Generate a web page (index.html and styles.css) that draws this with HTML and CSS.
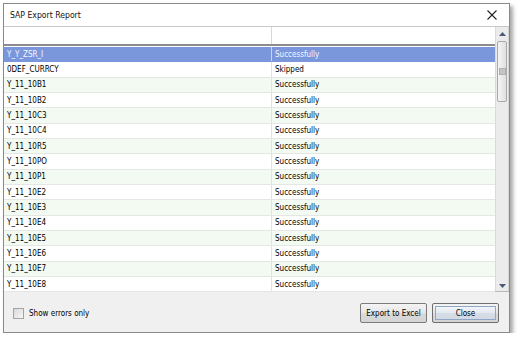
FILE: index.html
```html
<!DOCTYPE html>
<html>
<head>
<meta charset="utf-8">
<link rel="stylesheet" href="styles.css">
</head>
<body>
<div class="window">
  <div class="titlebar">
    <span class="title">SAP Export Report</span>
    <svg class="close-x" width="10" height="10" viewBox="0 0 10 10"><path d="M0.5 0.5 L9.5 9.5 M9.5 0.5 L0.5 9.5" stroke="#222" stroke-width="1.1" fill="none"/></svg>
  </div>
  <div class="grid">
    <div class="table">
      <div class="row header"><div class="c1"></div><div class="c2"></div></div>
      <div class="row selected"><div class="c1">Y_Y_ZSR_I</div><div class="c2">Successfully</div></div>
      <div class="row"><div class="c1">0DEF_CURRCY</div><div class="c2">Skipped</div></div>
      <div class="row alt"><div class="c1">Y_11_10B1</div><div class="c2">Successfully</div></div>
      <div class="row"><div class="c1">Y_11_10B2</div><div class="c2">Successfully</div></div>
      <div class="row alt"><div class="c1">Y_11_10C3</div><div class="c2">Successfully</div></div>
      <div class="row"><div class="c1">Y_11_10C4</div><div class="c2">Successfully</div></div>
      <div class="row alt"><div class="c1">Y_11_10R5</div><div class="c2">Successfully</div></div>
      <div class="row"><div class="c1">Y_11_10PO</div><div class="c2">Successfully</div></div>
      <div class="row alt"><div class="c1">Y_11_10P1</div><div class="c2">Successfully</div></div>
      <div class="row"><div class="c1">Y_11_10E2</div><div class="c2">Successfully</div></div>
      <div class="row alt"><div class="c1">Y_11_10E3</div><div class="c2">Successfully</div></div>
      <div class="row"><div class="c1">Y_11_10E4</div><div class="c2">Successfully</div></div>
      <div class="row alt"><div class="c1">Y_11_10E5</div><div class="c2">Successfully</div></div>
      <div class="row"><div class="c1">Y_11_10E6</div><div class="c2">Successfully</div></div>
      <div class="row alt"><div class="c1">Y_11_10E7</div><div class="c2">Successfully</div></div>
      <div class="row"><div class="c1">Y_11_10E8</div><div class="c2">Successfully</div></div>
    </div>
    <div class="scrollbar">
      <svg class="arrow" width="7" height="4" viewBox="0 0 7 4"><path d="M0 4 L3.5 0 L7 4 Z" fill="#4a5a78"/></svg>
      <div class="thumb"><div class="grip"></div></div>
      <div class="track"></div>
      <svg class="arrow" width="7" height="4" viewBox="0 0 7 4"><path d="M0 0 L7 0 L3.5 4 Z" fill="#4a5a78"/></svg>
    </div>
  </div>
  <div class="footer">
    <label class="check"><span class="box"></span>Show errors only</label>
    <div class="buttons">
      <button class="btn">Export to Excel</button>
      <button class="btn focused"><span>Close</span></button>
    </div>
  </div>
</div>
</body>
</html>
```
FILE: styles.css
```css
html, body {
  margin: 0;
  padding: 0;
  background: #ffffff;
}
body {
  font-family: "DejaVu Sans Condensed", "Liberation Sans", Arial, sans-serif;
  font-size: 8px;
  color: #000;
}
.window {
  margin: 3px 0 0 3px;
  width: 505px;
  height: 328px;
  border: 1px solid #8a8a8a;
  box-shadow: 3px 3px 4px rgba(0,0,0,0.35);
  display: flex;
  flex-direction: column;
  background: #f0f0f0;
}
.titlebar {
  height: 22px;
  flex: none;
  background: #fff;
  border-bottom: 1px solid #c8c8c8;
  display: flex;
  align-items: center;
  justify-content: space-between;
  padding: 0 12px 0 6px;
}
.title {
  font-size: 8.6px;
  color: #111;
}
.grid {
  flex: none;
  height: 264px;
  display: flex;
  background: #fff;
  border-bottom: 1px solid #b8b8b8;
}
.table {
  flex: 1;
  display: flex;
  flex-direction: column;
}
.row {
  height: 15.33px;
  display: flex;
  box-sizing: border-box;
  border-bottom: 1px solid #e4e8e4;
  flex: none;
}
.row > div {
  display: flex;
  align-items: center;
  padding-left: 3px;
  box-sizing: border-box;
  white-space: nowrap;
}
.c1 {
  width: 268px;
  border-right: 1px solid #e2e2e2;
}
.c2 {
  flex: 1;
}
.row.header {
  height: 19px;
  border-bottom: 2px solid #8c8c8c;
  margin-bottom: 1px;
}
.row.header .c1 {
  border-right-color: #d8d8d8;
}
.row.alt {
  background: #f3faf1;
}
.row.selected {
  background: #7b97dc;
  color: #f4f6ff;
  border-bottom-color: #7b97dc;
}
.row.selected .c1 {
  border-right-color: #c9d4f2;
}
.scrollbar {
  width: 14px;
  flex: none;
  background: #ebebeb;
  border-left: 1px solid #dadada;
  border-right: 1px solid #d6d6d6;
  display: flex;
  flex-direction: column;
  align-items: center;
  padding: 5px 0 3px;
  box-sizing: border-box;
}
.arrow {
  flex: none;
}
.thumb {
  margin-top: 5px;
  width: 10px;
  height: 61px;
  box-sizing: border-box;
  border: 1px solid #a9a9a9;
  border-radius: 2px;
  background: linear-gradient(to right, #f4f4f4, #e0e0e0);
  display: flex;
  align-items: center;
  justify-content: center;
}
.grip {
  width: 5px;
  height: 5px;
  background: #c4c4c4;
  border: 1px solid #b0b0b0;
}
.track {
  flex: 1;
}
.footer {
  flex: 1;
  display: flex;
  align-items: center;
  justify-content: space-between;
  padding: 0 10px 0 9px;
  background: #f0f0f0;
}
.check {
  display: flex;
  align-items: center;
  gap: 5px;
  margin-top: 2px;
}
.box {
  width: 9px;
  height: 9px;
  border: 1px solid #a4a4a4;
  background: linear-gradient(135deg, #d8d8d8, #f8f8f8);
}
.buttons {
  display: flex;
  gap: 5px;
  margin-top: 2px;
}
.btn {
  font-family: "DejaVu Sans Condensed", "Liberation Sans", Arial, sans-serif;
  font-size: 8px;
  color: #000;
  width: 67px;
  height: 20px;
  padding: 0;
  border: 1px solid #7c7c7c;
  border-radius: 2px;
  background: linear-gradient(#f4f4f4, #e6e6e6 50%, #dadada 51%, #d4d4d4);
  display: flex;
  align-items: center;
  justify-content: center;
}
.btn.focused {
  border-color: #6f6f6f;
  padding: 2px;
}
.btn.focused span {
  flex: 1;
  align-self: stretch;
  display: flex;
  align-items: center;
  justify-content: center;
  border: 1px solid #8fa6c6;
  background: linear-gradient(#f2f5f9, #e2e8f0 50%, #d6dde7 51%, #d2d9e3);
}
```
